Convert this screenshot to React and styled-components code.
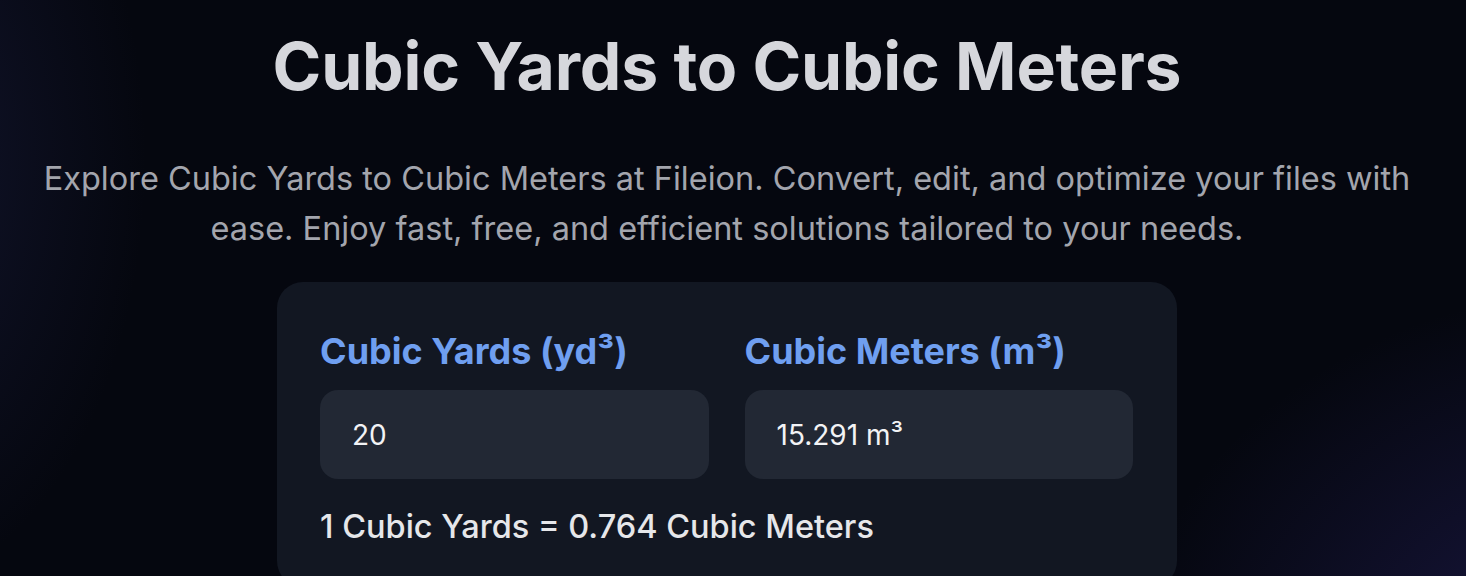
import React, { useState } from "react"
import styled, { createGlobalStyle } from "styled-components"

const GlobalStyle = createGlobalStyle`
  html, body {
    margin: 0;
    padding: 0;
    background: #05070f;
  }
  body {
    font-family: Inter, "Noto Sans", sans-serif;
  }
`

const Page = styled.main`
  min-height: 576px;
  box-sizing: border-box;
  padding: 26px 52px 0 40px;
  display: flex;
  flex-direction: column;
  align-items: center;
  overflow: hidden;
  background:
    radial-gradient(ellipse 380px 620px at -120px 160px, rgba(40, 44, 96, 0.38), transparent 70%),
    radial-gradient(ellipse 700px 560px at 1620px 680px, rgba(44, 38, 112, 0.55), transparent 70%),
    #05070f;
`

const Title = styled.h1`
  margin: 0;
  font-size: 66px;
  line-height: 80px;
  font-weight: 700;
  color: #d6d7dc;
  letter-spacing: -0.2px;
  text-align: center;
`

const Intro = styled.p`
  margin: 48px 0 0;
  max-width: 1400px;
  font-size: 32.5px;
  line-height: 50px;
  color: #a3a5ad;
  text-align: center;
`

const Card = styled.section`
  margin-top: 28px;
  width: 900px;
  box-sizing: border-box;
  padding: 48px 44px 40px 43px;
  background: #121722;
  border-radius: 26px;
`

const Fields = styled.div`
  display: grid;
  grid-template-columns: 1fr 1fr;
  column-gap: 36px;
`

const Field = styled.label`
  display: flex;
  flex-direction: column;
  gap: 18px;
`

const FieldLabel = styled.span`
  font-size: 36px;
  line-height: 42px;
  font-weight: 700;
  color: #6f9ff0;
`

const Box = styled.input`
  height: 89px;
  box-sizing: border-box;
  border: none;
  outline: none;
  border-radius: 18px;
  background: #222834;
  padding: 0 32px;
  font-family: Inter, "Noto Sans", sans-serif;
  font-size: 28px;
  color: #f2f3f5;
  width: 100%;
`

const Ratio = styled.p`
  margin: 28px 0 0;
  font-size: 32.5px;
  line-height: 40px;
  font-weight: 500;
  color: #e6e7ea;
`

export default function App() {
  const [yards, setYards] = useState("20")
  const meters = (parseFloat(yards || "0") * 0.764555).toFixed(3)

  return (
    <>
      <GlobalStyle />
      <Page>
        <Title>Cubic Yards to Cubic Meters</Title>
        <Intro>
          Explore Cubic Yards to Cubic Meters at Fileion. Convert, edit, and optimize your files with
          ease. Enjoy fast, free, and efficient solutions tailored to your needs.
        </Intro>
        <Card>
          <Fields>
            <Field>
              <FieldLabel>Cubic Yards (yd³)</FieldLabel>
              <Box value={yards} onChange={(e) => setYards(e.target.value)} />
            </Field>
            <Field>
              <FieldLabel>Cubic Meters (m³)</FieldLabel>
              <Box value={`${meters} m³`} readOnly />
            </Field>
          </Fields>
          <Ratio>1 Cubic Yards = 0.764 Cubic Meters</Ratio>
        </Card>
      </Page>
    </>
  )
}
